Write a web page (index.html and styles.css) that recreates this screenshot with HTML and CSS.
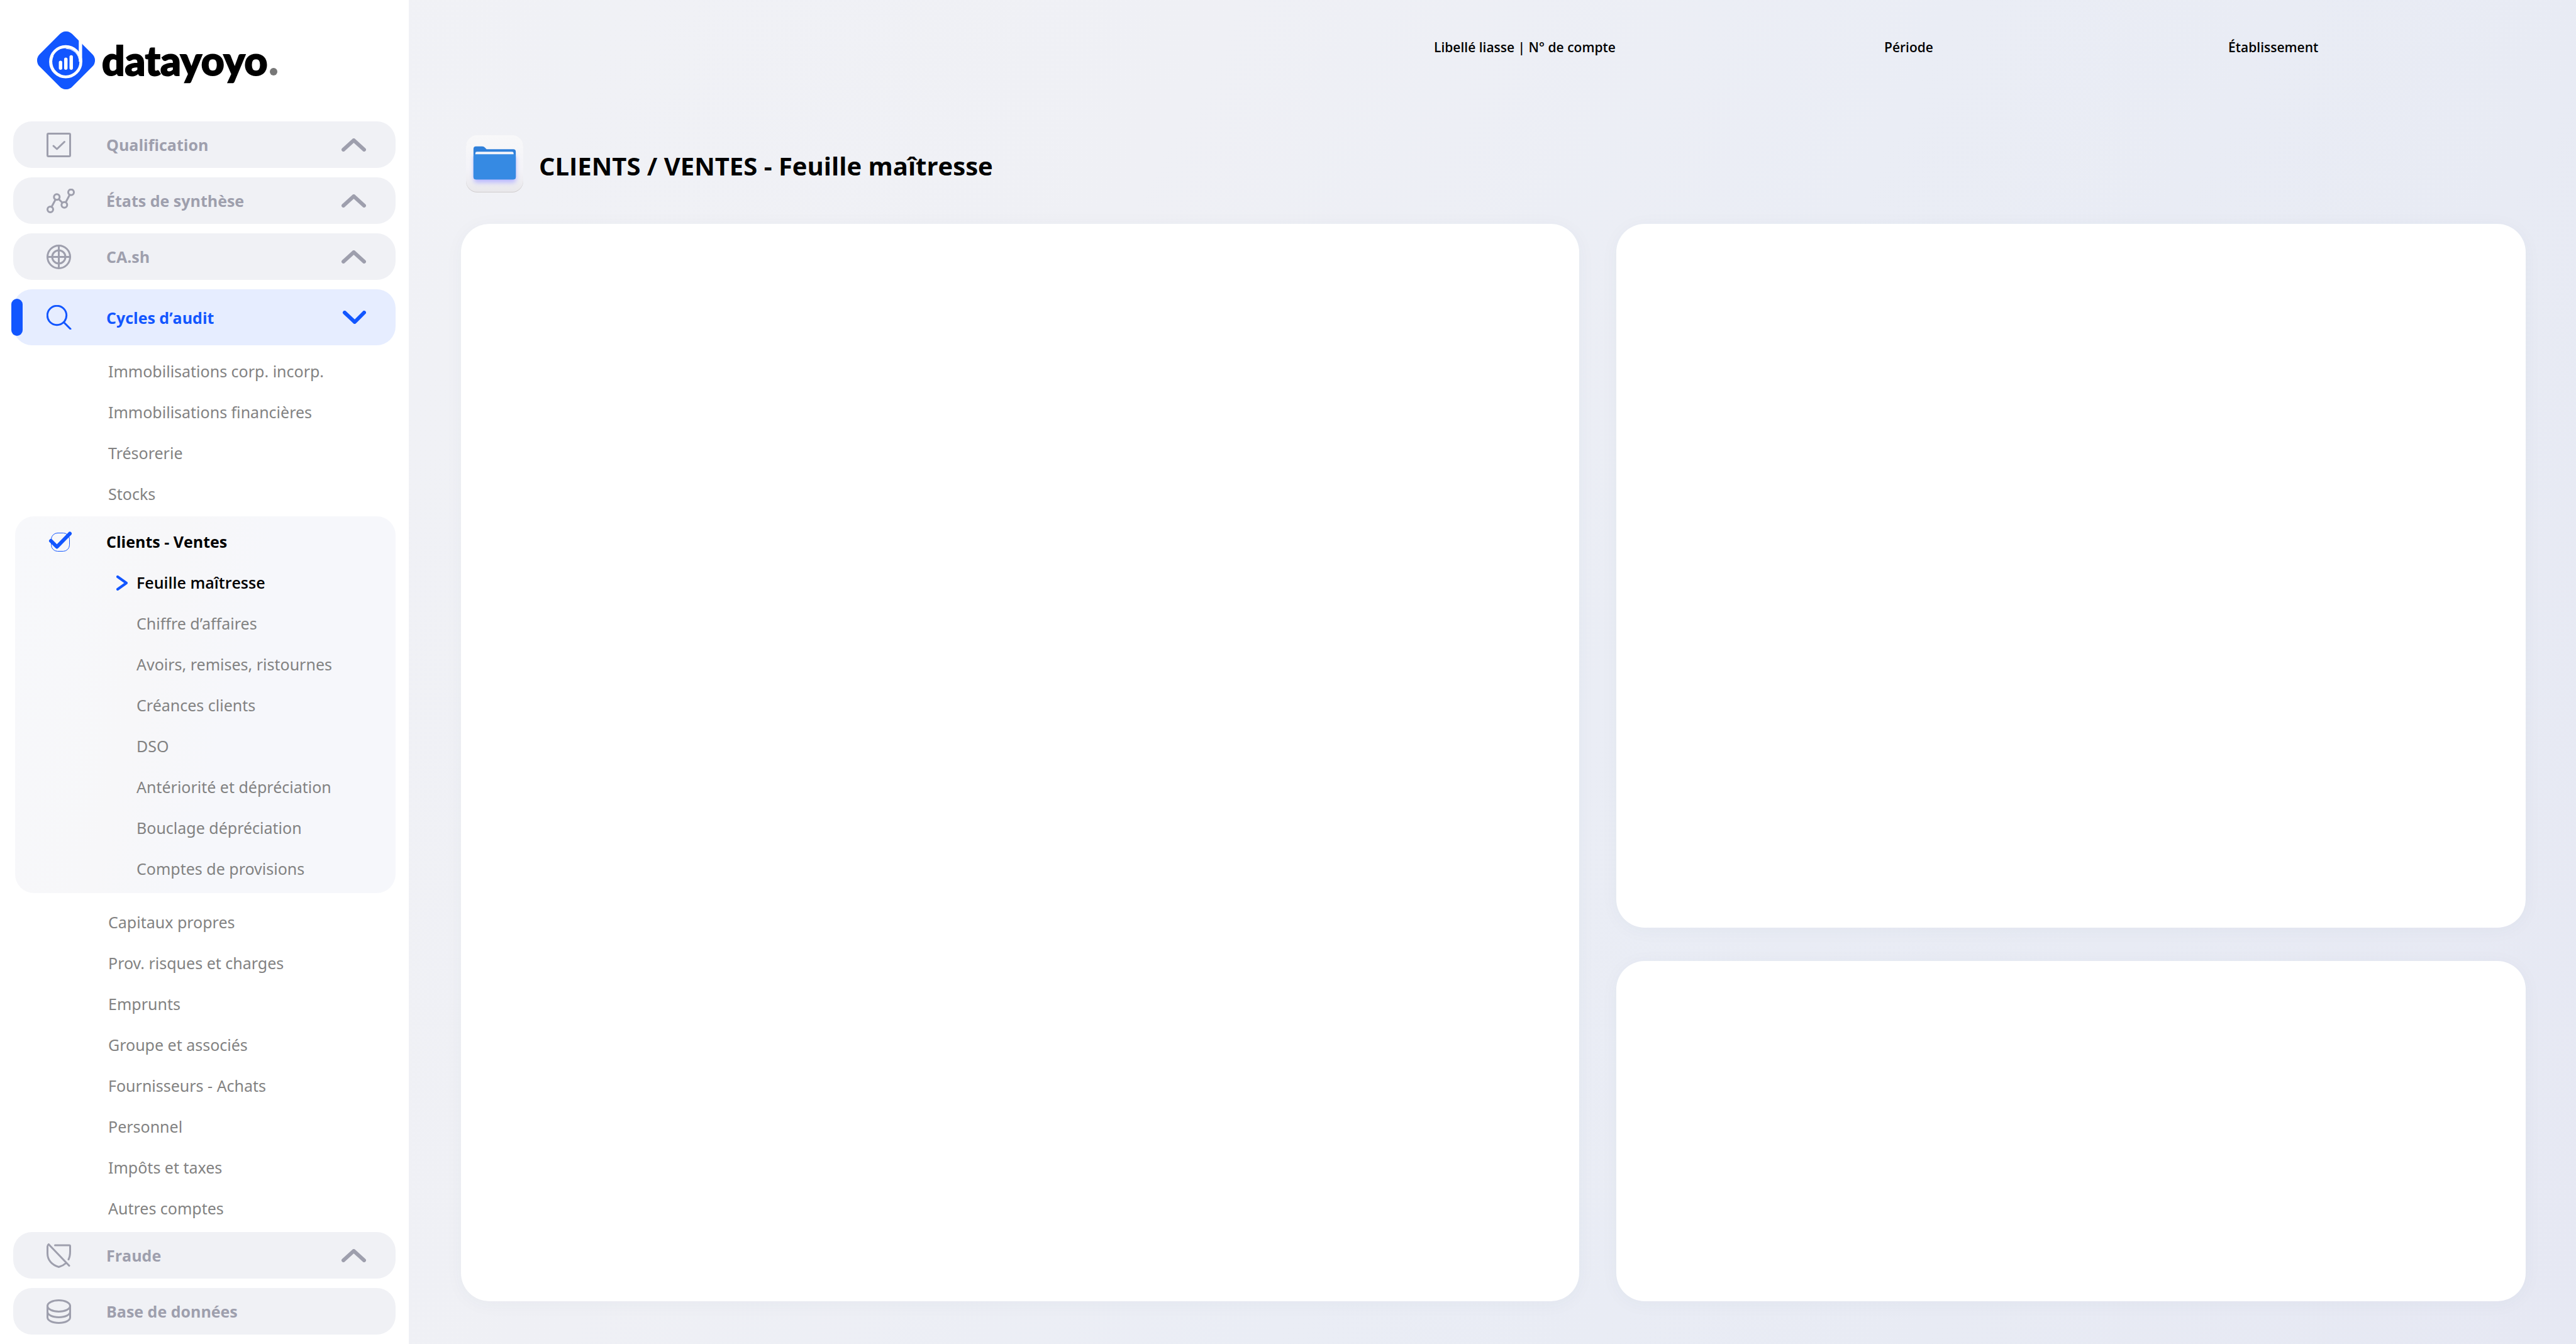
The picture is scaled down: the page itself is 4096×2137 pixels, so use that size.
FILE: index.html
```html
<!DOCTYPE html>
<html lang="fr">
<head>
<meta charset="utf-8">
<title>datayoyo - Feuille maîtresse</title>
<link rel="stylesheet" href="styles.css">
</head>
<body>
<div class="app">
  <aside class="sidebar">
    <a class="brand" href="#">
      <svg class="brand-mark" viewBox="0 0 279 279" aria-hidden="true">
        <rect x="28.5" y="28.5" width="222" height="222" rx="42" fill="#1256ff" transform="rotate(45 139.5 139.5)"/>
        <path d="M209 10V146" fill="none" stroke="#fff" stroke-width="16"/>
        <circle cx="138" cy="146" r="73" fill="none" stroke="#fff" stroke-width="14"/>
        <path d="M114 208A66 66 0 0 1 78 118M138 82A65 65 0 0 1 202 134" fill="none" stroke="#fff" stroke-width="3"/>
        <path d="M113 149V177M138.500 134V177M164.500 123V177" fill="none" stroke="#fff" stroke-width="16.500" stroke-linecap="round"/>
      </svg>
      <span class="brand-name">datayoyo<span class="brand-dot"></span></span>
    </a>
    <nav class="menu">
      <button class="section" type="button">
        <svg class="icon" viewBox="0 0 46 39" aria-hidden="true"><rect x="1.500" y="1.500" width="36" height="36" rx="1.500"/><path d="M11 21L16.500 26L28.500 14.500"/></svg>
        <span class="section-label">Qualification</span>
        <svg class="chevron" viewBox="0 0 39 21" aria-hidden="true"><path d="M3 18L19.500 3L36 18"/></svg>
      </button>
      <button class="section" type="button">
        <svg class="icon" viewBox="0 0 46 39" aria-hidden="true"><circle cx="6" cy="33" r="4.500"/><circle cx="16.300" cy="13.300" r="4.500"/><circle cx="28.300" cy="25.700" r="4.500"/><circle cx="39" cy="5.700" r="4.500"/><path d="M8 29L14.300 17.300M19.500 16.700L25.200 22.400M30.500 21.700L36.800 9.700"/></svg>
        <span class="section-label">États de synthèse</span>
        <svg class="chevron" viewBox="0 0 39 21" aria-hidden="true"><path d="M3 18L19.500 3L36 18"/></svg>
      </button>
      <button class="section" type="button">
        <svg class="icon" viewBox="0 0 46 39" aria-hidden="true"><circle cx="19.500" cy="19.500" r="18"/><circle cx="19.500" cy="19.500" r="10.500"/><path d="M1.500 19.500H37.500M19.500 1.500V37.500"/></svg>
        <span class="section-label">CA.sh</span>
        <svg class="chevron" viewBox="0 0 39 21" aria-hidden="true"><path d="M3 18L19.500 3L36 18"/></svg>
      </button>
      <button class="section section-open" type="button" aria-expanded="true">
        <svg class="icon" viewBox="0 0 46 39" aria-hidden="true"><circle cx="16.500" cy="16.500" r="15.200"/><path d="M27.500 27.500L38 38"/></svg>
        <span class="section-label">Cycles d’audit</span>
        <svg class="chevron" viewBox="0 0 39 21" aria-hidden="true"><path d="M5 3L21 18L36 3"/></svg>
      </button>
      <ul class="links links-first">
        <li><a href="#">Immobilisations corp. incorp.</a></li>
        <li><a href="#">Immobilisations financières</a></li>
        <li><a href="#">Trésorerie</a></li>
        <li><a href="#">Stocks</a></li>
      </ul>
      <div class="group">
        <a class="group-title" href="#">
          <svg class="icon-check" viewBox="0 0 46 39" aria-hidden="true"><rect x="7.500" y="5.500" width="29" height="29" rx="10" stroke-width="1"/><path d="M7 18L16.500 27.500L37 6.500" stroke-width="6"/></svg>
          <span>Clients - Ventes</span>
        </a>
        <ul class="sublinks">
          <li><a class="current" href="#" aria-current="page"><svg class="pointer" viewBox="0 0 18 24" aria-hidden="true"><path d="M2 2L16 12L2 22"/></svg>Feuille maîtresse</a></li>
          <li><a href="#">Chiffre d’affaires</a></li>
          <li><a href="#">Avoirs, remises, ristournes</a></li>
          <li><a href="#">Créances clients</a></li>
          <li><a href="#">DSO</a></li>
          <li><a href="#">Antériorité et dépréciation</a></li>
          <li><a href="#">Bouclage dépréciation</a></li>
          <li><a href="#">Comptes de provisions</a></li>
        </ul>
      </div>
      <ul class="links links-last">
        <li><a href="#">Capitaux propres</a></li>
        <li><a href="#">Prov. risques et charges</a></li>
        <li><a href="#">Emprunts</a></li>
        <li><a href="#">Groupe et associés</a></li>
        <li><a href="#">Fournisseurs - Achats</a></li>
        <li><a href="#">Personnel</a></li>
        <li><a href="#">Impôts et taxes</a></li>
        <li><a href="#">Autres comptes</a></li>
      </ul>
      <button class="section" type="button">
        <svg class="icon" viewBox="0 0 46 39" aria-hidden="true"><path d="M13.500 3H36Q37.500 3 37.500 4.500V13C37.500 18 36.800 22 35 25.500M3.400 1.500L36 35.500M3.400 1.500Q1.500 3 1.500 5V16C1.500 27 9 34.500 19.500 37.500Q26.500 35.500 31.500 31"/></svg>
        <span class="section-label">Fraude</span>
        <svg class="chevron" viewBox="0 0 39 21" aria-hidden="true"><path d="M3 18L19.500 3L36 18"/></svg>
      </button>
      <button class="section" type="button">
        <svg class="icon" viewBox="0 0 46 39" aria-hidden="true"><ellipse cx="19.500" cy="10.500" rx="18" ry="9"/><path d="M1.500 10.500V28.500C1.500 33.500 9 37.500 19.500 37.500S37.500 33.500 37.500 28.500V10.500M1.500 19.500C1.500 24.500 9 28.500 19.500 28.500S37.500 24.500 37.500 19.500"/></svg>
        <span class="section-label">Base de données</span>
      </button>
    </nav>
  </aside>
  <main class="main">
    <header class="filters">
      <span class="filter-account">Libellé liasse | N° de compte</span>
      <span>Période</span>
      <span>Établissement</span>
    </header>
    <div class="heading">
      <svg class="folder" viewBox="0 0 92 92" aria-hidden="true">
        <defs>
          <linearGradient id="tile" x1="0" y1="0" x2="0" y2="1"><stop offset="0" stop-color="#f8f8f9"/><stop offset=".6" stop-color="#f3f3f8"/><stop offset="1" stop-color="#e9e8eb"/></linearGradient>
          <filter id="glow" x="-20%" y="-20%" width="140%" height="150%"><feGaussianBlur stdDeviation="4"/></filter>
        </defs>
        <rect x="0" y="1.500" width="92" height="90.500" rx="18" fill="#cfcccd"/>
        <rect x="0" y="0" width="92" height="91" rx="18" fill="url(#tile)"/>
        <rect x="13" y="33" width="67" height="43" rx="4" fill="#b9b8ff" filter="url(#glow)"/>
        <g transform="translate(0 1)">
          <path d="M12 21Q12 17 16 17H26Q29 17 30.500 19L33 21.500H76Q80 21.500 80 25.500V66Q80 70 76 70H16Q12 70 12 66Z" fill="#2f80da"/>
          <path d="M15 31V28Q15 25.500 17.500 25.500H74Q76.500 25.500 76.500 28V31Z" fill="#f3f4fa"/>
          <path d="M12 33Q12 29.500 16 29.500H76Q80 29.500 80 33V66Q80 70 76 70H16Q12 70 12 66Z" fill="#368ae3"/>
        </g>
      </svg>
      <h1>CLIENTS / VENTES - Feuille maîtresse</h1>
    </div>
    <div class="panels">
      <section class="panel panel-main"></section>
      <section class="panel"></section>
      <section class="panel"></section>
    </div>
  </main>
</div>
</body>
</html>
```
FILE: styles.css
```css
* {
  box-sizing: border-box;
}

body {
  margin: 0;
  font-family: "Open Sans", "Noto Sans", sans-serif;
  font-size: 25px;
  color: #000;
}

a {
  color: inherit;
  text-decoration: none;
}

ul {
  margin: 0;
  padding: 0;
  list-style: none;
}

svg {
  flex: none;
  fill: none;
}

.app {
  display: flex;
  min-height: 100vh;
  background: linear-gradient(117deg, #f1f2f6 0%, #eff0f5 38%, #eaedf5 60%, #e8ebf4 80%, #e6e8f3 100%);
}

/* Sidebar */

.sidebar {
  flex: none;
  width: 650px;
  padding: 50px 21px 14px;
  background: #fff;
}

.brand {
  display: flex;
  align-items: center;
  gap: 11px;
  margin: 0 0 51px 38px;
}

.brand-mark {
  width: 92px;
  height: 92px;
}

.brand-name {
  display: flex;
  align-items: baseline;
  gap: 4px;
  font-family: Lato, sans-serif;
  font-size: 64px;
  font-weight: 900;
  line-height: 92px;
  -webkit-text-stroke: 2px #000;
}

.brand-dot {
  width: 12px;
  height: 12px;
  border-radius: 50%;
  background: #777;
}

.menu {
  display: flex;
  flex-direction: column;
}

.section {
  position: relative;
  display: flex;
  align-items: center;
  gap: 49px;
  height: 74px;
  padding: 0 47px 0 53px;
  border: 0;
  border-radius: 30px;
  background: #f0f1f5;
  color: #9e9fad;
  font: inherit;
  font-weight: 700;
  text-align: left;
}

.section + .section {
  margin-top: 15px;
}

.section-label {
  flex: 1;
}

.icon {
  width: 46px;
  height: 39px;
  stroke: currentColor;
  stroke-width: 3;
  stroke-linecap: round;
  stroke-linejoin: round;
}

.chevron {
  width: 39px;
  height: 21px;
  stroke: currentColor;
  stroke-width: 6;
  stroke-linecap: round;
  stroke-linejoin: round;
}

.section-open {
  height: 89px;
  background: #e6edff;
  color: #1256ff;
}

.section-open::before {
  content: "";
  position: absolute;
  left: -3px;
  top: 15px;
  bottom: 15px;
  width: 18px;
  border-radius: 9px;
  background: #1256ff;
}

.links a,
.sublinks a {
  display: block;
  font-family: "Noto Sans", "Open Sans", sans-serif;
  line-height: 65px;
  color: #828282;
}

.links {
  padding-left: 151px;
}

.links-first {
  margin: 9px 0 3px;
}

.links-last {
  margin: 14px 0 5px;
}

.group {
  margin-left: 3px;
  padding: 7px 0 6px;
  border-radius: 30px;
  background: linear-gradient(104deg, #f7f8fb, #f7f7f9 35%, #f6f7fb 55%, #f6f7fb);
}

.group-title {
  display: flex;
  align-items: center;
  gap: 49px;
  padding-left: 50px;
  line-height: 66px;
  font-weight: 700;
}

.icon-check {
  width: 46px;
  height: 39px;
  stroke: #1256ff;
  stroke-linecap: round;
  stroke-linejoin: round;
}

.sublinks {
  padding-left: 193px;
}

.sublinks .current {
  position: relative;
  font-family: inherit;
  color: #000;
  font-weight: 600;
}

.pointer {
  position: absolute;
  top: 21px;
  left: -32px;
  width: 18px;
  height: 24px;
  stroke: #1256ff;
  stroke-width: 4;
  stroke-linecap: round;
  stroke-linejoin: round;
}

/* Main area */

.main {
  flex: 1;
  display: flex;
  flex-direction: column;
  padding: 60px 80px 68px 83px;
}

.filters {
  display: grid;
  grid-template-columns: 1547fr 716fr 547fr 473fr;
  font-size: 21px;
  font-weight: 600;
  line-height: 30px;
}

.filter-account {
  grid-column: 2;
}

.heading {
  display: flex;
  align-items: center;
  gap: 25px;
  margin: 125px 0 50px 8px;
}

.folder {
  width: 91px;
  height: 91px;
}

h1 {
  margin: 0;
  padding-top: 6px;
  font-size: 40px;
  font-weight: 700;
  line-height: 56px;
}

.panels {
  flex: 1;
  display: grid;
  grid-template-columns: 1778fr 1446fr;
  grid-template-rows: 1119fr 541fr;
  gap: 53px 59px;
}

.panel {
  border-radius: 45px;
  background: #fff;
  box-shadow: 0 4px 30px rgba(60, 70, 110, 0.04);
}

.panel-main {
  grid-row: 1 / 3;
}
```
